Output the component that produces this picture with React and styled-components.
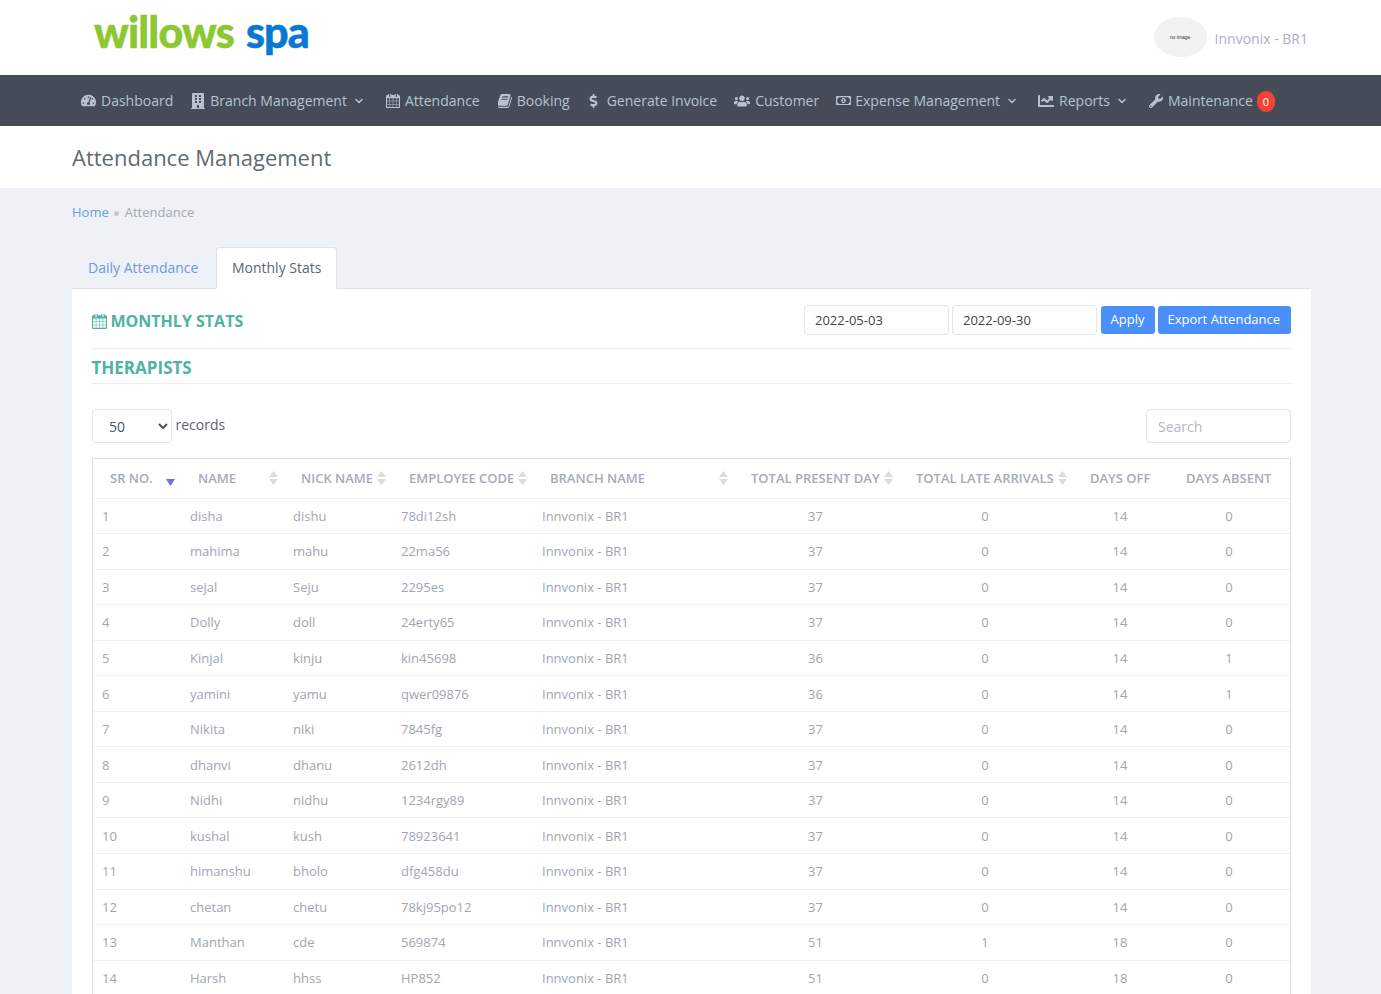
import React from "react";
import styled, { createGlobalStyle } from "styled-components";
import {
  FaTachometerAlt,
  FaBuilding,
  FaDollarSign,
  FaUsers,
  FaRegMoneyBillAlt,
  FaChartLine,
  FaWrench,
} from "react-icons/fa";
import { FiChevronDown } from "react-icons/fi";

const GlobalStyle = createGlobalStyle`
  html, body {
    margin: 0;
    height: 100%;
    overflow: hidden;
    background: #eef1f6;
    font-family: "Open Sans", "Liberation Sans", sans-serif;
    font-size: 14px;
  }
  * { box-sizing: border-box; }
`;

const TopBar = styled.header`
  height: 75px;
  background: #fff;
  display: flex;
  align-items: center;
  justify-content: space-between;
  padding: 0 73px 0 94px;
`;
const Logo = styled.div`
  font-family: "Lato", sans-serif;
  font-weight: 900;
  font-size: 43px;
  line-height: 1;
  letter-spacing: -0.85px;
  display: flex;
  gap: 12px;
  margin-top: -13px;
  -webkit-text-stroke: 0.5px currentColor;
`;
const LogoWord = styled.span`
  color: ${(p) => p.$color};
`;
const UserBox = styled.div`
  display: flex;
  align-items: center;
  gap: 8px;
  margin-top: -1px;
`;
const Avatar = styled.div`
  width: 53px;
  height: 40px;
  border-radius: 50%;
  background: #f2f2f2;
  color: #333;
  font-family: "Liberation Sans", sans-serif;
  font-size: 5px;
  display: flex;
  align-items: center;
  justify-content: center;
`;
const UserName = styled.span`
  color: #a9afc4;
  font-size: 14px;
  margin-top: 3px;
`;

const NavBar = styled.nav`
  height: 51px;
  background: #454c58;
  display: flex;
  align-items: center;
  padding-left: 81px;
`;
const NavItem = styled.div`
  display: flex;
  align-items: center;
  color: #b5c3d0;
  font-size: 14px;
  margin-right: ${(p) => p.$after}px;
`;
const NavIcon = styled.span`
  display: flex;
  align-items: center;
  justify-content: center;
  width: ${(p) => p.$w}px;
  margin-right: ${(p) => p.$gap}px;
  color: #b8c2cc;
  font-size: ${(p) => p.$size || 14}px;
`;
const Chevron = styled(FiChevronDown)`
  margin-left: 6px;
  font-size: 12px;
  stroke-width: 3px;
`;
const Badge = styled.span`
  width: 18px;
  height: 21px;
  margin-left: 4px;
  margin-top: 2px;
  border-radius: 9px;
  background: #f44336;
  color: #fff;
  font-size: 11px;
  display: flex;
  align-items: center;
  justify-content: center;
`;

const TitleBar = styled.div`
  height: 62px;
  background: #fff;
  padding-left: 72px;
  display: flex;
  align-items: center;
`;
const PageTitle = styled.h1`
  margin: 0;
  font-size: 22px;
  font-weight: 400;
  color: #5f6b72;
`;

const Content = styled.main`
  padding: 0 70px 0 72px;
`;
const Crumbs = styled.div`
  height: 59px;
  padding-top: 15px;
  display: flex;
  align-items: flex-start;
  font-size: 13px;
  line-height: 18px;
  color: #a3a9b5;
`;
const CrumbLink = styled.span`
  color: #6c9bd8;
`;
const CrumbDot = styled.span`
  width: 5px;
  height: 5px;
  margin: 8px 6px 0 5px;
  border-radius: 50%;
  background: #c5cad3;
`;
const Tabs = styled.div`
  display: flex;
  gap: 1.5px;
  height: 42px;
  border-bottom: 1px solid #dee2e6;
`;
const Tab = styled.div`
  height: 42px;
  padding: 0 15px 2px;
  display: flex;
  align-items: center;
  border: 1px solid ${(p) => (p.$active ? "#dee2e6" : "transparent")};
  border-bottom-color: ${(p) => (p.$active ? "#fff" : "transparent")};
  border-radius: 4px 4px 0 0;
  background: ${(p) => (p.$active ? "#fff" : "transparent")};
  color: ${(p) => (p.$active ? "#5c6570" : "#6c9bd8")};
  font-size: 14px;
`;
const Card = styled.section`
  background: #fff;
  padding: 16px 20px 0;
`;
const CardHead = styled.div`
  display: flex;
  justify-content: space-between;
  align-items: center;
  height: 44px;
  padding-bottom: 13px;
  border-bottom: 1px solid #eaecef;
`;
const Heading = styled.h2`
  margin: 2px 0 0 -0.5px;
  display: flex;
  align-items: center;
  gap: 4px;
  font-size: ${(p) => p.$size}px;
  line-height: 22px;
  font-weight: 700;
  color: #4fb3a1;
`;
const SubHead = styled.div`
  height: 35px;
  padding-top: 1px;
  display: flex;
  align-items: center;
  border-bottom: 1px solid #eaecef;
`;
const Filters = styled.div`
  display: flex;
  align-items: center;
`;
const DateInput = styled.input`
  width: 145px;
  height: 30px;
  margin-right: 3px;
  padding: 0 10px;
  border: 1px solid #e2e4e8;
  border-radius: 4px;
  font: 13px "Open Sans", sans-serif;
  color: #3d4450;
  outline: none;
`;
const Button = styled.button`
  width: ${(p) => p.$w}px;
  height: 28px;
  margin-left: ${(p) => p.$gap}px;
  padding: 0 0 2px 9.5px;
  border: none;
  border-radius: 3px;
  background: #4b8ffb;
  color: #fff;
  font: 13px "Open Sans", sans-serif;
  text-align: left;
`;
const Controls = styled.div`
  display: flex;
  justify-content: space-between;
  align-items: center;
  margin: 25px 0 15px;
`;
const LengthBox = styled.div`
  display: flex;
  align-items: center;
  gap: 3.5px;
  color: #5c6570;
`;
const RecordsLabel = styled.span`
  margin-bottom: 4px;
`;
const LengthSelect = styled.select`
  width: 80px;
  height: 34px;
  padding-left: 12px;
  border: 1px solid #e2e4e8;
  border-radius: 4px;
  background: #fff;
  font: 14px "Open Sans", sans-serif;
  color: #4a5260;
  outline: none;
`;
const Search = styled.input`
  width: 145px;
  height: 34px;
  padding: 0 11px;
  border: 1px solid #e2e4e8;
  border-radius: 4px;
  font: 14px "Open Sans", sans-serif;
  outline: none;
  &::placeholder { color: #b5b8bd; }
`;

const TableBox = styled.div`
  border: 1px solid #ddd;
  border-bottom: none;
`;
const Table = styled.table`
  width: 1197px;
  table-layout: fixed;
  border-collapse: separate;
  border-spacing: 0;
`;
const Th = styled.th`
  width: ${(p) => p.$w}px;
  height: 39.55px;
  padding: 0 5px 0 18px;
  border-bottom: 1px solid #eef0f3;
  font-size: 13px;
  font-weight: 600;
  color: #a6abb6;
  text-align: left;
  white-space: nowrap;
  &:first-child { padding-left: 17px; }
`;
const ThInner = styled.div`
  display: flex;
  align-items: center;
  justify-content: space-between;
`;
const Td = styled.td`
  height: 35.55px;
  padding: 0 10px;
  border-bottom: 1px solid #eef0f3;
  font-size: 13px;
  color: #a1a6b0;
  text-align: ${(p) => (p.$center ? "center" : "left")};
  &:first-child { padding-left: 9px; }
`;

const SortIcon = () => (
  <svg width="9" height="14" viewBox="0 0 9 14">
    <path d="M4.5 0 9 6H0z M4.5 14 0 8h9z" fill="#dcdcdc" />
  </svg>
);
const SortedIcon = styled.svg`
  width: 9px;
  height: 7px;
  margin: 8px 0 0;
`;

const CalendarIcon = ({ size }) => (
  <svg width={size} height={size} viewBox="128 128 1536 1664" fill="currentColor">
    <path d="M192 1664h288v-288h-288v288zm352 0h320v-288h-320v288zm-352-352h288v-320h-288v320zm352 0h320v-320h-320v320zm-352-384h288v-288h-288v288zm736 736h320v-288h-320v288zm-384-736h320v-288h-320v288zm768 736h288v-288h-288v288zm-384-352h320v-320h-320v320zm-352-864v-288q0-13-9.5-22.5t-22.5-9.5h-64q-13 0-22.5 9.5t-9.5 22.5v288q0 13 9.5 22.5t22.5 9.5h64q13 0 22.5-9.5t9.5-22.5zm736 864h288v-320h-288v320zm-384-384h320v-288h-320v288zm384 0h288v-288h-288v288zm32-480v-288q0-13-9.5-22.5t-22.5-9.5h-64q-13 0-22.5 9.5t-9.5 22.5v288q0 13 9.5 22.5t22.5 9.5h64q13 0 22.5-9.5t9.5-22.5zm384-64v1280q0 52-38 90t-90 38h-1408q-52 0-90-38t-38-90v-1280q0-52 38-90t90-38h128v-96q0-66 47-113t113-47h64q66 0 113 47t47 113v96h384v-96q0-66 47-113t113-47h64q66 0 113 47t47 113v96h128q52 0 90 38t38 90z" />
  </svg>
);

const BookIcon = () => (
  <svg width="14" height="14" viewBox="128 128 1536 1536" fill="currentColor">
    <path d="M1639 478q40 57 18 129l-275 906q-19 64-76.500 107.500t-122.500 43.500h-923q-77 0-148.500-53.500t-99.500-131.500q-24-67-2-127 0-4 3-27t4-37q1-8-3-21.500t-3-19.500q2-11 8-21t16.500-23.500 16.500-23.500q23-38 45-91.500t30-91.500q3-10 .5-30t-.5-28q3-11 17-28t17-23q21-36 42-92t25-90q1-9-2.500-32t.5-28q4-13 22-30.500t22-22.500q19-26 42.500-84.500t27.500-96.500q1-8-3-25.500t-2-26.500q2-8 9-18t18-23 17-21q8-12 16.500-30.500t15-35 16-36 19.500-32 26.500-23.500 36-11.500 47.500 5.500l-1 3q38-9 51-9h761q74 0 114 56t18 130l-274 906q-36 119-71.500 153.500t-128.500 34.500h-869q-27 0-38 15-11 16-1 43 24 70 144 70h923q29 0 56-15.500t35-41.500l300-987q7-22 5-57 38 15 59 43zm-1064 2q-4 13 2 22.500t20 9.500h608q13 0 25.500-9.500t16.500-22.500l21-64q4-13-2-22.500t-20-9.500h-608q-13 0-25.500 9.500t-16.500 22.500zm-83 256q-4 13 2 22.500t20 9.500h608q13 0 25.500-9.500t16.500-22.500l21-64q4-13-2-22.500t-20-9.500h-608q-13 0-25.500 9.500t-16.500 22.500z" />
  </svg>
);

const navItems = [
  { label: "Dashboard", icon: <FaTachometerAlt />, size: 15, w: 15, gap: 5, after: 18 },
  { label: "Branch Management", icon: <FaBuilding />, size: 16, w: 14, gap: 5, menu: true, after: 21 },
  { label: "Attendance", icon: <CalendarIcon size={14} />, w: 14, gap: 5, after: 18 },
  { label: "Booking", icon: <BookIcon />, w: 14, gap: 5, after: 19 },
  { label: "Generate Invoice", icon: <FaDollarSign />, w: 9, gap: 9, after: 17 },
  { label: "Customer", icon: <FaUsers />, size: 18, w: 16, gap: 5, after: 16 },
  { label: "Expense Management", icon: <FaRegMoneyBillAlt />, size: 15, w: 16, gap: 4, menu: true, after: 19 },
  { label: "Reports", icon: <FaChartLine />, size: 16, w: 17, gap: 5, menu: true, after: 21 },
  { label: "Maintenance", icon: <FaWrench />, w: 14, gap: 5, badge: 0, after: 0 },
];

const columns = [
  { label: "SR NO.", w: 87, sorted: true },
  { label: "NAME", w: 103, sort: true },
  { label: "NICK NAME", w: 108, sort: true },
  { label: "EMPLOYEE CODE", w: 141, sort: true },
  { label: "BRANCH NAME", w: 201, sort: true },
  { label: "TOTAL PRESENT DAY", w: 165, sort: true },
  { label: "TOTAL LATE ARRIVALS", w: 174, sort: true },
  { label: "DAYS OFF", w: 96 },
  { label: "DAYS ABSENT", w: 122 },
];

const rows = [
  ["disha", "dishu", "78di12sh", 37, 0, 14, 0],
  ["mahima", "mahu", "22ma56", 37, 0, 14, 0],
  ["sejal", "Seju", "2295es", 37, 0, 14, 0],
  ["Dolly", "doll", "24erty65", 37, 0, 14, 0],
  ["Kinjal", "kinju", "kin45698", 36, 0, 14, 1],
  ["yamini", "yamu", "qwer09876", 36, 0, 14, 1],
  ["Nikita", "niki", "7845fg", 37, 0, 14, 0],
  ["dhanvi", "dhanu", "2612dh", 37, 0, 14, 0],
  ["Nidhi", "nidhu", "1234rgy89", 37, 0, 14, 0],
  ["kushal", "kush", "78923641", 37, 0, 14, 0],
  ["himanshu", "bholo", "dfg458du", 37, 0, 14, 0],
  ["chetan", "chetu", "78kj95po12", 37, 0, 14, 0],
  ["Manthan", "cde", "569874", 51, 1, 18, 0],
  ["Harsh", "hhss", "HP852", 51, 0, 18, 0],
];

export default function App() {
  return (
    <>
      <GlobalStyle />
      <TopBar>
        <Logo>
          <LogoWord $color="#8cc832">willows</LogoWord>
          <LogoWord $color="#0a78d2">spa</LogoWord>
        </Logo>
        <UserBox>
          <Avatar>no image</Avatar>
          <UserName>Innvonix - BR1</UserName>
        </UserBox>
      </TopBar>
      <NavBar>
        {navItems.map((item) => (
          <NavItem key={item.label} $after={item.after}>
            <NavIcon $w={item.w} $gap={item.gap} $size={item.size}>{item.icon}</NavIcon>
            {item.label}
            {item.menu && <Chevron />}
            {item.badge !== undefined && <Badge>{item.badge}</Badge>}
          </NavItem>
        ))}
      </NavBar>
      <TitleBar>
        <PageTitle>Attendance Management</PageTitle>
      </TitleBar>
      <Content>
        <Crumbs>
          <CrumbLink>Home</CrumbLink>
          <CrumbDot />
          Attendance
        </Crumbs>
        <Tabs>
          <Tab>Daily Attendance</Tab>
          <Tab $active>Monthly Stats</Tab>
        </Tabs>
        <Card>
          <CardHead>
            <Heading $size={16}>
              <CalendarIcon size={15} />
              MONTHLY STATS
            </Heading>
            <Filters>
              <DateInput defaultValue="2022-05-03" />
              <DateInput defaultValue="2022-09-30" />
              <Button $w={54} $gap={1}>Apply</Button>
              <Button $w={133} $gap={3}>Export Attendance</Button>
            </Filters>
          </CardHead>
          <SubHead>
            <Heading $size={17}>THERAPISTS</Heading>
          </SubHead>
          <Controls>
            <LengthBox>
              <LengthSelect defaultValue="50">
                <option>10</option>
                <option>25</option>
                <option>50</option>
                <option>100</option>
              </LengthSelect>
              <RecordsLabel>records</RecordsLabel>
            </LengthBox>
            <Search placeholder="Search" />
          </Controls>
          <TableBox>
            <Table>
              <thead>
                <tr>
                  {columns.map((col) => (
                    <Th key={col.label} $w={col.w}>
                      <ThInner>
                        {col.label}
                        {col.sort && <SortIcon />}
                        {col.sorted && (
                          <SortedIcon viewBox="0 0 9 7">
                            <path d="M0 0h9L4.500 7z" fill="#6f72d8" />
                          </SortedIcon>
                        )}
                      </ThInner>
                    </Th>
                  ))}
                </tr>
              </thead>
              <tbody>
                {rows.map((r, i) => (
                  <tr key={i}>
                    <Td>{i + 1}</Td>
                    <Td>{r[0]}</Td>
                    <Td>{r[1]}</Td>
                    <Td>{r[2]}</Td>
                    <Td>Innvonix - BR1</Td>
                    <Td $center>{r[3]}</Td>
                    <Td $center>{r[4]}</Td>
                    <Td $center>{r[5]}</Td>
                    <Td $center>{r[6]}</Td>
                  </tr>
                ))}
              </tbody>
            </Table>
          </TableBox>
        </Card>
      </Content>
    </>
  );
}
